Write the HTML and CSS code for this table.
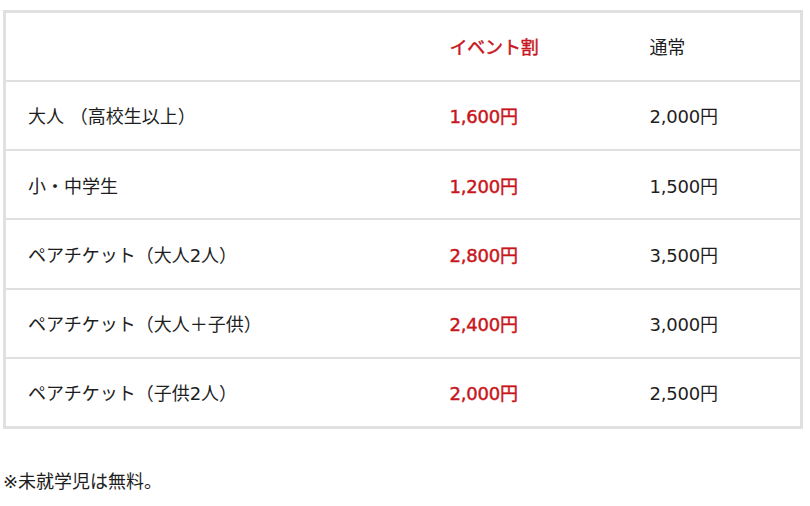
FILE: index.html
```html
<!DOCTYPE html>
<html lang="ja">
<head>
<meta charset="utf-8">
<link rel="stylesheet" href="styles.css">
</head>
<body>
<div class="page">
  <table class="price">
    <thead>
      <tr><th></th><th class="event">イベント割</th><th>通常</th></tr>
    </thead>
    <tbody>
      <tr><td>大人 （高校生以上）</td><td class="event">1,600円</td><td>2,000円</td></tr>
      <tr><td>小・中学生</td><td class="event">1,200円</td><td>1,500円</td></tr>
      <tr><td>ペアチケット（大人2人）</td><td class="event">2,800円</td><td>3,500円</td></tr>
      <tr><td>ペアチケット（大人＋子供）</td><td class="event">2,400円</td><td>3,000円</td></tr>
      <tr><td>ペアチケット（子供2人）</td><td class="event">2,000円</td><td>2,500円</td></tr>
    </tbody>
  </table>
  <p class="note">※未就学児は無料。</p>
</div>
</body>
</html>
```
FILE: styles.css
```css
html, body {
  margin: 0;
  padding: 0;
  background: #fff;
}
body {
  font-family: "DejaVu Sans", "Noto Sans CJK JP", sans-serif;
  font-size: 18px;
  color: #1e1e1e;
}
.page {
  padding: 10px 7px 0 3px;
}
.price {
  width: 800px;
  border-collapse: collapse;
  border: 3px solid #e0e0e0;
}
.price th, .price td {
  height: 69.25px;
  padding: 0 0 0 22px;
  text-align: left;
  font-weight: normal;
  vertical-align: middle;
  box-sizing: border-box;
}
.price tbody tr {
  border-top: 2px solid #e0e0e0;
}
.price th:nth-child(1), .price td:nth-child(1) { width: 423px; }
.price th:nth-child(2), .price td:nth-child(2) { width: 200px; }
.price th:nth-child(n+2), .price td:nth-child(n+2) { letter-spacing: -0.2px; }
.price .event {
  color: #c8161d;
  -webkit-text-stroke: 0.45px #c8161d;
}
.note {
  margin: 38px 0 0 0;
  font-size: 18px;
}
```
